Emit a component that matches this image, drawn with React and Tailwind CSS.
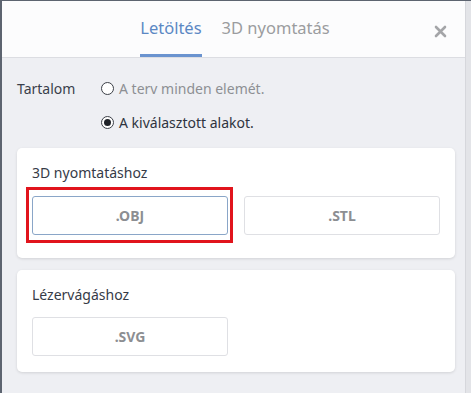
import React, { useState } from 'react';

const font = { fontFamily: '"Noto Sans", "Open Sans", sans-serif' };

const Radio = ({ checked, label, onSelect }) => (
  <button type="button" onClick={onSelect} className="flex items-center gap-[5px] h-[20px]">
    <span className="w-[13px] h-[13px] rounded-full border-[1.5px] border-[#3b3f47] bg-white flex items-center justify-center">
      {checked && <span className="w-[7px] h-[7px] rounded-full bg-[#1f2228]" />}
    </span>
    <span className={`text-[14px] ${checked ? 'text-[#2f3440]' : 'text-[#8d8f94]'}`}>{label}</span>
  </button>
);

const FormatButton = ({ label, active }) => (
  <button
    type="button"
    className={`w-[196px] h-[39px] rounded-[3px] border bg-white text-[14px] font-bold text-[#8c8e92] ${
      active ? 'border-[#8aa6c8]' : 'border-[#dfe0e4]'
    }`}
  >
    {label}
  </button>
);

export default function App() {
  const [tab, setTab] = useState('download');
  const [content, setContent] = useState('selected');

  return (
    <div className="w-[471px] h-[393px] overflow-hidden bg-[#e3e4e8] border-t border-l-2 border-[#5d6470]" style={font}>
      <div className="w-[464px] h-full bg-[#eeeff3] border-r border-[#d6d7dc] flex flex-col">
        {/* Header */}
        <div className="relative h-[57px] bg-[#fcfcfd] border-b border-[#dcdde2] flex justify-center">
          <div className="flex gap-[20px] ml-[3px]">
            <button
              onClick={() => setTab('download')}
              className={`h-full pt-[2px] text-[16.5px] border-b-[3px] ${
                tab === 'download' ? 'text-[#5b88c4] border-[#6a93cf]' : 'text-[#9b9c9f] border-transparent'
              }`}
            >
              Letöltés
            </button>
            <button
              onClick={() => setTab('print')}
              className={`h-full pt-[2px] text-[16.5px] border-b-[3px] ${
                tab === 'print' ? 'text-[#5b88c4] border-[#6a93cf]' : 'text-[#9b9c9f] border-transparent'
              }`}
            >
              3D nyomtatás
            </button>
          </div>
          <button className="absolute right-[18px] top-[24px] text-[#a4a5a8]">
            <svg width="13" height="13" viewBox="0 0 13 13">
              <path d="M2 2 L11 11 M11 2 L2 11" stroke="currentColor" strokeWidth="2.6" strokeLinecap="round" />
            </svg>
          </button>
        </div>

        {/* Body */}
        <div className="pl-[15px] pr-[10px] pt-[20px]">
          <div className="flex">
            <div className="w-[84px] h-[20px] text-[14px] text-[#3a3f4b]">Tartalom</div>
            <div className="flex flex-col gap-[14px]">
              <Radio checked={content === 'all'} label="A terv minden elemét." onSelect={() => setContent('all')} />
              <Radio checked={content === 'selected'} label="A kiválasztott alakot." onSelect={() => setContent('selected')} />
            </div>
          </div>

          <div className="mt-[16px] bg-white rounded-[5px] shadow-[0_1px_3px_rgba(0,0,0,0.12)] px-[15px] pt-[15px] pb-[23px]">
            <div className="text-[14px] leading-[20px] text-[#363b47]">3D nyomtatáshoz</div>
            <div className="mt-[13px] flex gap-[16px]">
              <div className="relative">
                <FormatButton label=".OBJ" active />
                <div className="absolute -left-[6px] -right-[5px] -top-[9px] -bottom-[8px] border-[3px] border-[#e1141c] pointer-events-none" />
              </div>
              <FormatButton label=".STL" />
            </div>
          </div>

          <div className="mt-[12px] bg-white rounded-[5px] shadow-[0_1px_3px_rgba(0,0,0,0.12)] px-[15px] pt-[15px] pb-[16px]">
            <div className="text-[14px] leading-[20px] text-[#363b47]">Lézervágáshoz</div>
            <div className="mt-[12px] flex">
              <FormatButton label=".SVG" />
            </div>
          </div>
        </div>
      </div>
    </div>
  );
}
